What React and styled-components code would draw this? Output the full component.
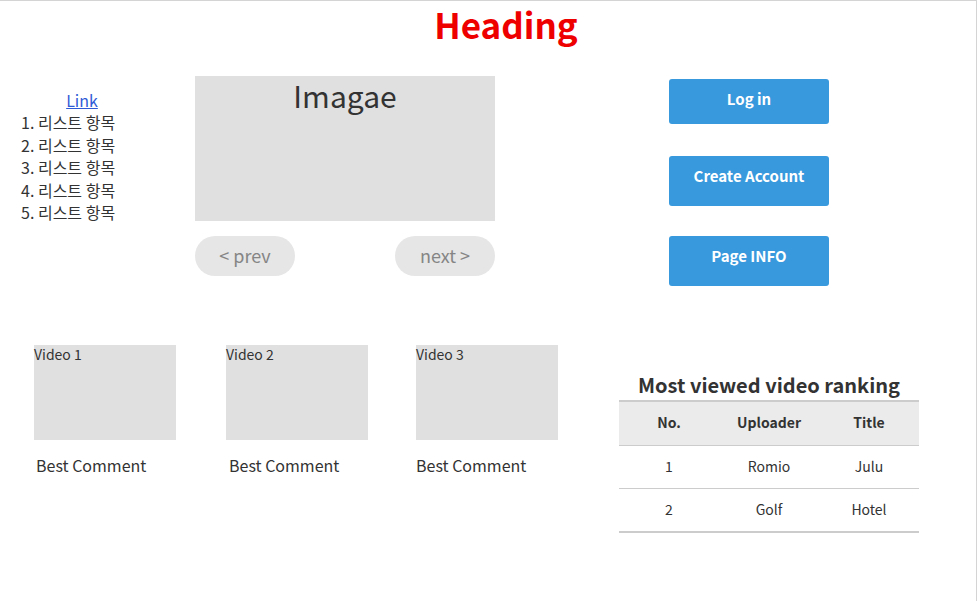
import React from 'react'
import styled, { createGlobalStyle } from 'styled-components'

const GlobalStyle = createGlobalStyle`
  html, body {
    margin: 0;
    padding: 0;
    background: #fff;
  }
  body {
    font-family: "Noto Sans CJK KR", "Noto Sans", sans-serif;
    color: #333;
  }
`

const Frame = styled.div`
  box-sizing: border-box;
  width: 977px;
  height: 601px;
  border-top: 1px solid #d4d4d4;
  border-right: 1px solid #d4d4d4;
  overflow: hidden;
`

const Heading = styled.h1`
  margin: 0;
  padding: 0 0 1px 36px;
  text-align: center;
  color: #ee0000;
  font-size: 35px;
  line-height: 46px;
  font-weight: 700;
`

const TopSection = styled.section`
  display: flex;
  align-items: flex-start;
`

const Nav = styled.nav`
  width: 195px;
  padding-top: 42px;
  font-size: 16px;
`

const NavLink = styled.a`
  display: block;
  width: 164px;
  line-height: 21px;
  text-align: center;
  color: #2f5bd6;
  text-decoration: underline;
`

const List = styled.ol`
  margin: 0;
  padding-left: 21px;
  line-height: 22.5px;
  list-style-position: inside;
`

const Slider = styled.div`
  width: 300px;
  padding-top: 28px;
`

const ImageBox = styled.div`
  height: 145px;
  background: #e0e0e0;
  text-align: center;
  font-size: 30px;
  line-height: 38px;
  color: #333;
`

const SlideControls = styled.div`
  display: flex;
  justify-content: space-between;
  margin-top: 15px;
`

const PillButton = styled.button`
  width: 100px;
  height: 40px;
  border: none;
  border-radius: 20px;
  background: #e6e6e6;
  color: #858585;
  font-family: inherit;
  font-size: 18px;
  padding: 0 0 2px;
`

const ButtonColumn = styled.div`
  display: flex;
  flex-direction: column;
  margin-left: 174px;
  padding-top: 31px;
`

const ActionButton = styled.button`
  box-sizing: border-box;
  display: flex;
  justify-content: center;
  align-items: flex-start;
  width: 160px;
  height: ${p => p.$height}px;
  margin-bottom: ${p => p.$gap}px;
  border: none;
  border-radius: 3px;
  background: #3899dd;
  color: #fff;
  font-family: inherit;
  font-size: 15px;
  font-weight: 700;
  line-height: 22px;
  padding: 9px 0 0;
`

const BottomSection = styled.section`
  display: flex;
  align-items: flex-start;
  margin-top: 59px;
  padding-left: 34px;
`

const Videos = styled.div`
  display: flex;
`

const VideoCard = styled.div`
  width: 142px;
  margin-right: ${p => p.$gap}px;
`

const VideoThumb = styled.div`
  height: 95px;
  background: #e0e0e0;
  font-size: 14px;
  line-height: 18px;
  color: #333;
`

const Comment = styled.p`
  margin: 13px 0 0 ${p => p.$indent}px;
  font-size: 16px;
  line-height: 24px;
  color: #333;
`

const Ranking = styled.div`
  width: 300px;
  margin-left: 61px;
  margin-top: 25px;
`

const RankingTitle = styled.h2`
  margin: 0 0 1px;
  text-align: center;
  font-size: 20px;
  line-height: 29px;
  font-weight: 700;
  color: #333;
`

const Table = styled.table`
  width: 300px;
  border-collapse: collapse;
  border-top: 2px solid #cccccc;
  border-bottom: 2px solid #cccccc;
  table-layout: fixed;
  font-size: 14px;
  color: #333;
`

const HeadCell = styled.th`
  height: 40px;
  padding: 0 0 3px;
  background: #ebebeb;
  font-weight: 700;
  border-bottom: 1px solid #cccccc;
  text-align: center;
`

const Cell = styled.td`
  height: 39px;
  padding: 0 0 3px;
  text-align: center;
  border-bottom: ${p => (p.$last ? 'none' : '1px solid #cccccc')};
`

const videos = [
  { label: 'Video 1', gap: 50, indent: 2 },
  { label: 'Video 2', gap: 48, indent: 3 },
  { label: 'Video 3', gap: 0, indent: 0 },
]
const ranking = [
  { no: 1, uploader: 'Romio', title: 'Julu' },
  { no: 2, uploader: 'Golf', title: 'Hotel' },
]

export default function App() {
  return (
    <Frame>
      <GlobalStyle />
      <Heading>Heading</Heading>
      <TopSection>
        <Nav>
          <NavLink href="#">Link</NavLink>
          <List>
            {[1, 2, 3, 4, 5].map(n => (
              <li key={n}>리스트 항목</li>
            ))}
          </List>
        </Nav>
        <Slider>
          <ImageBox>Imagae</ImageBox>
          <SlideControls>
            <PillButton>&lt; prev</PillButton>
            <PillButton>next &gt;</PillButton>
          </SlideControls>
        </Slider>
        <ButtonColumn>
          <ActionButton $height={45} $gap={32}>Log in</ActionButton>
          <ActionButton $height={50} $gap={30}>Create Account</ActionButton>
          <ActionButton $height={50} $gap={0}>Page INFO</ActionButton>
        </ButtonColumn>
      </TopSection>
      <BottomSection>
        <Videos>
          {videos.map(v => (
            <VideoCard key={v.label} $gap={v.gap}>
              <VideoThumb>{v.label}</VideoThumb>
              <Comment $indent={v.indent}>Best Comment</Comment>
            </VideoCard>
          ))}
        </Videos>
        <Ranking>
          <RankingTitle>Most viewed video ranking</RankingTitle>
          <Table>
            <thead>
              <tr>
                <HeadCell>No.</HeadCell>
                <HeadCell>Uploader</HeadCell>
                <HeadCell>Title</HeadCell>
              </tr>
            </thead>
            <tbody>
              {ranking.map((r, i) => (
                <tr key={r.no}>
                  <Cell $last={i === ranking.length - 1}>{r.no}</Cell>
                  <Cell $last={i === ranking.length - 1}>{r.uploader}</Cell>
                  <Cell $last={i === ranking.length - 1}>{r.title}</Cell>
                </tr>
              ))}
            </tbody>
          </Table>
        </Ranking>
      </BottomSection>
    </Frame>
  )
}
